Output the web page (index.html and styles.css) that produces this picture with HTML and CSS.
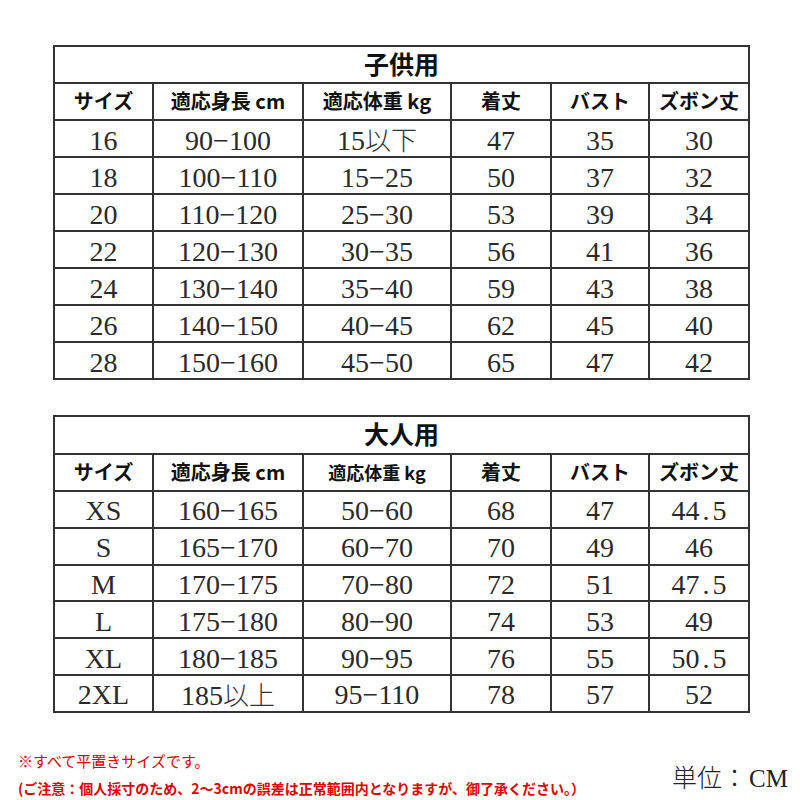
FILE: index.html
```html
<!DOCTYPE html>
<html lang="ja">
<head>
<meta charset="utf-8">
<title>サイズ表</title>
<link rel="stylesheet" href="styles.css">
</head>
<body>
<div class="page">
  <table class="size-table">
    <colgroup>
      <col class="c1"><col class="c2"><col class="c3"><col class="c4"><col class="c5"><col class="c6">
    </colgroup>
    <tr class="title-row"><th colspan="6">子供用</th></tr>
    <tr class="head-row">
      <th>サイズ</th><th>適応身長 cm</th><th>適応体重 kg</th><th>着丈</th><th>バスト</th><th>ズボン丈</th>
    </tr>
    <tr><td>16</td><td>90−100</td><td>15<span class="cjk">以下</span></td><td>47</td><td>35</td><td>30</td></tr>
    <tr><td>18</td><td>100−110</td><td>15−25</td><td>50</td><td>37</td><td>32</td></tr>
    <tr><td>20</td><td>110−120</td><td>25−30</td><td>53</td><td>39</td><td>34</td></tr>
    <tr><td>22</td><td>120−130</td><td>30−35</td><td>56</td><td>41</td><td>36</td></tr>
    <tr><td>24</td><td>130−140</td><td>35−40</td><td>59</td><td>43</td><td>38</td></tr>
    <tr><td>26</td><td>140−150</td><td>40−45</td><td>62</td><td>45</td><td>40</td></tr>
    <tr><td>28</td><td>150−160</td><td>45−50</td><td>65</td><td>47</td><td>42</td></tr>
  </table>

  <table class="size-table adult">
    <colgroup>
      <col class="c1"><col class="c2"><col class="c3"><col class="c4"><col class="c5"><col class="c6">
    </colgroup>
    <tr class="title-row"><th colspan="6">大人用</th></tr>
    <tr class="head-row">
      <th>サイズ</th><th>適応身長 cm</th><th class="narrow">適応体重 kg</th><th>着丈</th><th>バスト</th><th>ズボン丈</th>
    </tr>
    <tr><td>XS</td><td>160−165</td><td>50−60</td><td>68</td><td>47</td><td>44<span class="dot">.</span>5</td></tr>
    <tr><td>S</td><td>165−170</td><td>60−70</td><td>70</td><td>49</td><td>46</td></tr>
    <tr><td>M</td><td>170−175</td><td>70−80</td><td>72</td><td>51</td><td>47<span class="dot">.</span>5</td></tr>
    <tr><td>L</td><td>175−180</td><td>80−90</td><td>74</td><td>53</td><td>49</td></tr>
    <tr><td>XL</td><td>180−185</td><td>90−95</td><td>76</td><td>55</td><td>50<span class="dot">.</span>5</td></tr>
    <tr><td>2XL</td><td>185<span class="cjk">以上</span></td><td>95−110</td><td>78</td><td>57</td><td>52</td></tr>
  </table>

  <div class="footer">
    <div class="notes">
      <p class="note-main">※すべて平置きサイズです。</p>
      <p class="note-sub">(ご注意：個人採寸のため、2〜3cmの誤差は正常範囲内となりますが、御了承ください。）</p>
    </div>
    <div class="unit"><span class="unit-cjk">単位：</span>CM</div>
  </div>
</div>
</body>
</html>
```

FILE: styles.css
```css
html, body {
  margin: 0;
  padding: 0;
  background: #ffffff;
}

.page {
  width: 800px;
  height: 800px;
  box-sizing: border-box;
  padding-top: 45px;
  display: flex;
  flex-direction: column;
  overflow: hidden;
}

.size-table {
  margin-left: 53px;
  width: 697px;
  border-collapse: collapse;
  table-layout: fixed;
  color: #222;
}

.size-table.adult {
  margin-top: 35px;
}

.c1 { width: 99px; }
.c2 { width: 150px; }
.c3 { width: 148px; }
.c4 { width: 100px; }
.c5 { width: 98px; }
.c6 { width: 100px; }

.size-table th,
.size-table td {
  border: 2px solid #333;
  padding: 0;
  text-align: center;
  vertical-align: middle;
  white-space: nowrap;
}

.title-row th {
  height: 32px;
  font-family: "Noto Sans CJK JP", sans-serif;
  font-weight: 700;
  font-size: 25px;
  line-height: 1;
  color: #111;
  padding-bottom: 3px;
}

.adult .title-row th {
  height: 33px;
}

.head-row th {
  height: 34px;
  font-family: "Noto Sans CJK JP", sans-serif;
  font-weight: 700;
  font-size: 20px;
  line-height: 1;
  color: #111;
  padding-bottom: 1px;
}

.head-row th.narrow {
  font-size: 18px;
}

.size-table td {
  height: 31px;
  font-family: "Liberation Serif", "Noto Sans CJK JP", serif;
  font-size: 28px;
  line-height: 1;
  color: #2a2a2a;
  padding-top: 4px;
}

.adult td {
  height: 30.8px;
}

.dot {
  margin: 0 3px;
}

.cjk {
  font-family: "Noto Sans CJK JP", sans-serif;
  font-weight: 300;
  font-size: 26px;
  color: #333;
}

.footer {
  margin-top: 39px;
  display: flex;
  justify-content: space-between;
  align-items: flex-end;
}

.notes {
  margin-left: 18px;
  display: flex;
  flex-direction: column;
  gap: 11px;
}

.notes p {
  margin: 0;
  font-family: "Noto Sans CJK JP", sans-serif;
  color: #e00000;
  line-height: 1.15;
}

.note-main {
  font-size: 15px;
}

.note-sub {
  font-size: 14px;
  font-weight: 700;
}

.unit {
  margin-right: 12px;
  margin-bottom: 2px;
  font-family: "Liberation Serif", "Noto Sans CJK JP", serif;
  font-size: 25px;
  line-height: 1.15;
  color: #222;
}

.unit-cjk {
  font-family: "Noto Sans CJK JP", sans-serif;
  font-weight: 300;
  margin-right: 2px;
}
```
